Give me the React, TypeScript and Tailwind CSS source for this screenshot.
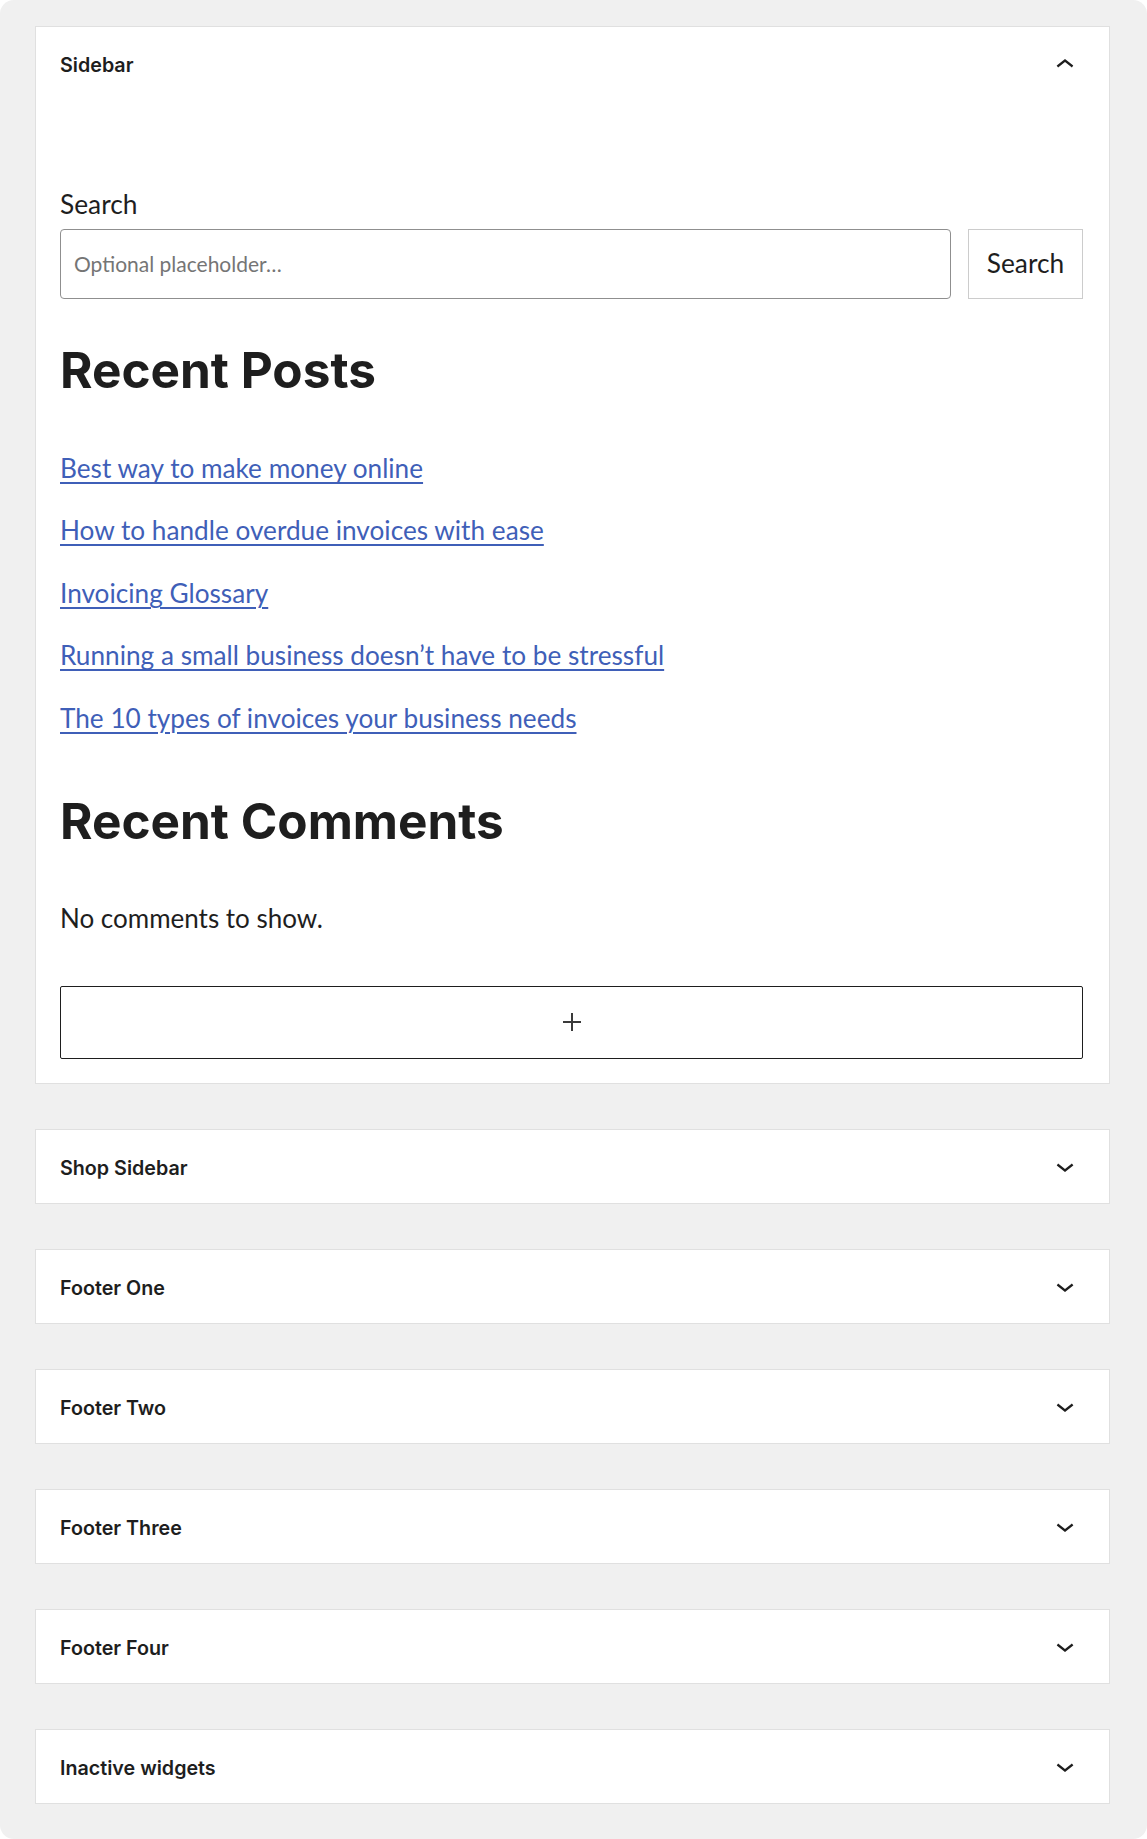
import React from "react";

const ChevronUp = () => (
  <svg width="36" height="36" viewBox="0 0 24 24" fill="#1e1e1e" aria-hidden="true">
    <path d="M6.5 12.4L12 8l5.5 4.4-.9 1.2L12 10l-4.6 3.6-1-1.2z" />
  </svg>
);

const ChevronDown = () => (
  <svg width="36" height="36" viewBox="0 0 24 24" fill="#1e1e1e" aria-hidden="true">
    <path d="M17.5 11.6L12 16l-5.5-4.4.9-1.2L12 14l4.6-3.6 1 1.2z" />
  </svg>
);

const PanelHeader = ({ title }: { title: string }) => (
  <div className="h-[73px] flex items-center justify-between pl-[24px] pr-[26px]">
    <span className="pt-[3px] text-[19.7px] leading-[24px] font-semibold text-[#1e1e1e] font-['Inter',sans-serif]">{title}</span>
    <ChevronDown />
  </div>
);

const posts = [
  "Best way to make money online",
  "How to handle overdue invoices with ease",
  "Invoicing Glossary",
  "Running a small business doesn’t have to be stressful",
  "The 10 types of invoices your business needs",
];

export default function App() {
  return (
    <div className="bg-white min-h-[1839px]">
      <div className="bg-[#f0f0f0] rounded-[14px] min-h-[1839px] pl-[35px] pr-[37px] pt-[26px] pb-[35px] flex flex-col gap-[45px]">
        <section className="bg-white border border-[#e0e0e0]">
          <div className="h-[76px] flex items-center justify-between pl-[24px] pr-[26px]">
            <span className="pt-[2px] text-[19.7px] font-semibold text-[#1e1e1e] font-['Inter',sans-serif]">Sidebar</span>
            <ChevronUp />
          </div>
          <div className="pl-[24px] pr-[26px] pb-[24px] font-['Lato',sans-serif] text-[#1e1e1e]">
            <div className="mt-[83px] text-[26.3px] leading-[36px]">Search</div>
            <div className="mt-[7px] flex gap-[17px]">
              <div className="flex-1 h-[70px] border border-[#8f8f8f] rounded-[4px] flex items-center pl-[13px]">
                <span className="text-[21px] text-[#757575]">Optional placeholder…</span>
              </div>
              <div className="w-[115px] h-[70px] border border-[#cccccc] flex items-center justify-center text-[26.3px]">
                Search
              </div>
            </div>
            <h2 className="mt-[41px] text-[49.5px] leading-[60px] font-bold font-['Inter',sans-serif] text-[#1e1e1e]">
              Recent Posts
            </h2>
            <ul className="mt-[50px] flex flex-col gap-[26.45px]">
              {posts.map((p) => (
                <li key={p} className="text-[26.2px] leading-[36px]">
                  <a className="text-[#3f5fb8] underline underline-offset-[4px] decoration-[1.5px]">{p}</a>
                </li>
              ))}
            </ul>
            <h2 className="mt-[55px] text-[49.5px] leading-[60px] font-bold font-['Inter',sans-serif] text-[#1e1e1e]">
              Recent Comments
            </h2>
            <p className="mt-[49px] text-[26px] leading-[36px]">No comments to show.</p>
            <div className="mt-[50px] h-[73px] border border-[#1e1e1e] rounded-[2px] flex items-center justify-center">
              <svg width="20" height="20" viewBox="0 0 20 20" aria-hidden="true">
                <path d="M10 1v18M1 10h18" stroke="#3a3a3a" strokeWidth="2" />
              </svg>
            </div>
          </div>
        </section>
        {["Shop Sidebar", "Footer One", "Footer Two", "Footer Three", "Footer Four", "Inactive widgets"].map((t) => (
          <section key={t} className="bg-white border border-[#e0e0e0]">
            <PanelHeader title={t} />
          </section>
        ))}
      </div>
    </div>
  );
}
